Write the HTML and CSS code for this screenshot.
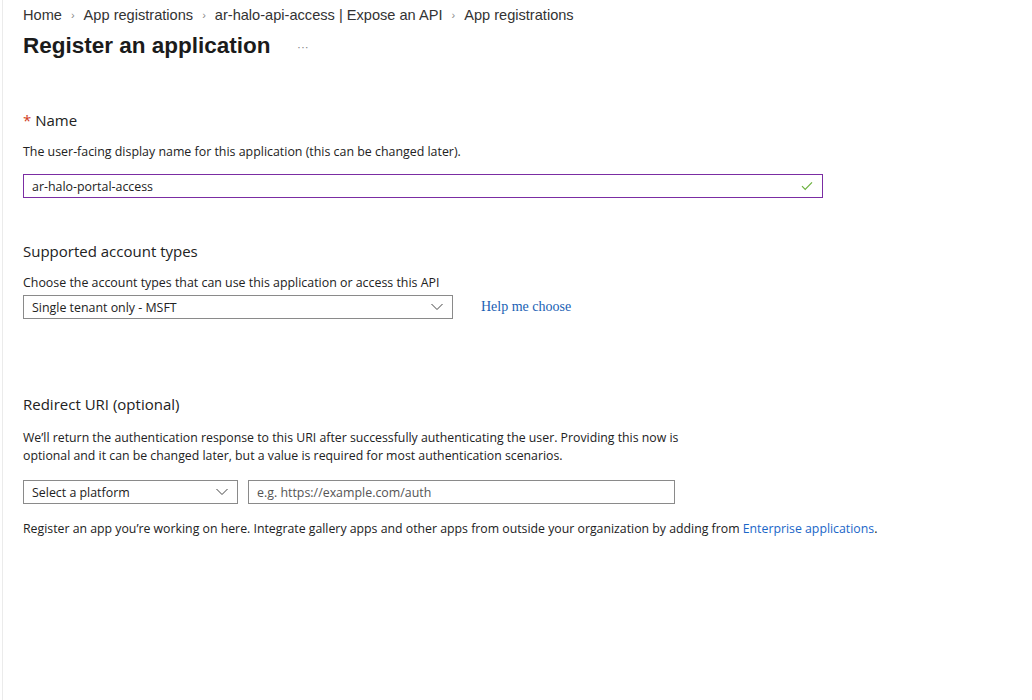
FILE: index.html
```html
<!DOCTYPE html>
<html lang="en">
<head>
    <meta charset="UTF-8">
    <meta name="viewport" content="width=device-width, initial-scale=1.0">
    <title>Register an application</title>
    <link rel="stylesheet" href="styles.css">
</head>
<body>

<div class="page">
    <nav class="crumbs">
        <a href="#">Home</a>
        <span class="sep">›</span>
        <a href="#">App registrations</a>
        <span class="sep">›</span>
        <a href="#">ar-halo-api-access | Expose an API</a>
        <span class="sep">›</span>
        <a href="#">App registrations</a>
    </nav>

    <div class="title-row">
        <h1>Register an application</h1>
        <span class="more">···</span>
    </div>

    <section class="field name-field">
        <h2><span class="req">*</span> Name</h2>
        <p class="hint">The user-facing display name for this application (this can be changed later).</p>
        <div class="textbox valid">
            <span>ar-halo-portal-access</span>
            <svg class="check" width="12" height="10" viewBox="0 0 12 10">
                <path d="M1 5.2 L4.2 8.4 L11 1.4" fill="none" stroke="#6bb13d" stroke-width="1.2"/>
            </svg>
        </div>
    </section>

    <section class="field account-field">
        <h2>Supported account types</h2>
        <p class="hint">Choose the account types that can use this application or access this API</p>
        <div class="row">
            <div class="dropdown wide">
                <span>Single tenant only - MSFT</span>
                <svg width="12" height="8" viewBox="0 0 12 8"><path d="M0.5 1 L6 6.5 L11.5 1" fill="none" stroke="#444" stroke-width="1"/></svg>
            </div>
            <a class="help" href="#">Help me choose</a>
        </div>
    </section>

    <section class="field redirect-field">
        <h2>Redirect URI (optional)</h2>
        <p class="hint narrow">We’ll return the authentication response to this URI after successfully authenticating the user. Providing this now is optional and it can be changed later, but a value is required for most authentication scenarios.</p>
        <div class="row">
            <div class="dropdown platform">
                <span>Select a platform</span>
                <svg width="12" height="8" viewBox="0 0 12 8"><path d="M0.5 1 L6 6.5 L11.5 1" fill="none" stroke="#444" stroke-width="1"/></svg>
            </div>
            <div class="textbox uri">
                <span class="placeholder">e.g. https://example.com/auth</span>
            </div>
        </div>
    </section>

    <p class="footer-note">Register an app you’re working on here. Integrate gallery apps and other apps from outside your organization by adding from <a href="#">Enterprise applications</a>.</p>
</div>

</body>
</html>
```

FILE: styles.css
```css
body {
    margin: 0;
    padding-left: 2px;
    background-color: #fff;
    color: #222;
    font-family: "Open Sans", "Noto Sans", sans-serif;
}

.page {
    min-height: 700px;
    box-sizing: border-box;
    border-left: 1px solid #ebebeb;
    padding: 5px 20px 0 20px;
}

.crumbs {
    font-family: "Liberation Sans", Arial, sans-serif;
    font-size: 14.6px;
    height: 20px;
    display: flex;
    align-items: center;
    gap: 9px;
}

.crumbs a {
    color: #333;
    text-decoration: none;
}

.crumbs .sep {
    color: #888;
    font-size: 11px;
}

.title-row {
    display: flex;
    align-items: center;
    height: 42px;
}

h1 {
    font-family: "Liberation Sans", Arial, sans-serif;
    font-size: 22.5px;
    font-weight: bold;
    margin: 0;
    color: #1b1b1b;
}

.more {
    color: #888;
    font-size: 11px;
    margin-left: 27px;
    letter-spacing: 1px;
}

.field h2 {
    font-size: 15px;
    font-weight: normal;
    margin: 0;
    color: #222;
}

.req {
    color: #d13a1c;
}

.hint {
    font-size: 12.4px;
    margin: 0;
    color: #222;
}

.name-field {
    margin-top: 43px;
}

.name-field .hint {
    margin-top: 13px;
}

.textbox,
.dropdown {
    box-sizing: border-box;
    height: 24px;
    border: 1px solid #8a8a8a;
    display: flex;
    align-items: center;
    justify-content: space-between;
    padding: 0 8px;
    font-size: 12.4px;
}

.textbox.valid {
    width: 800px;
    margin-top: 14px;
    border: 1.5px solid #7b2da3;
}

.check {
    margin-right: 1px;
}

.account-field {
    margin-top: 43px;
}

.account-field .hint {
    margin-top: 13px;
}

.row {
    display: flex;
    align-items: center;
}

.account-field .row {
    margin-top: 4px;
}

.dropdown.wide {
    width: 430px;
}

.dropdown svg {
    margin-right: 1px;
}

.help {
    font-family: "Liberation Serif", "Times New Roman", serif;
    font-size: 14px;
    color: #1a5fb4;
    text-decoration: none;
    margin-left: 28px;
}

.redirect-field {
    margin-top: 75px;
}

.redirect-field .hint {
    margin-top: 15px;
    line-height: 18px;
    font-size: 12.3px;
}

.narrow {
    max-width: 670px;
}

.redirect-field .row {
    margin-top: 15px;
    gap: 10px;
}

.dropdown.platform {
    width: 215px;
}

.textbox.uri {
    width: 427px;
}

.placeholder {
    color: #555;
}

.footer-note {
    font-size: 12.3px;
    margin: 16px 0 0;
    color: #222;
}

.footer-note a {
    color: #1a66c8;
    text-decoration: none;
}
```
